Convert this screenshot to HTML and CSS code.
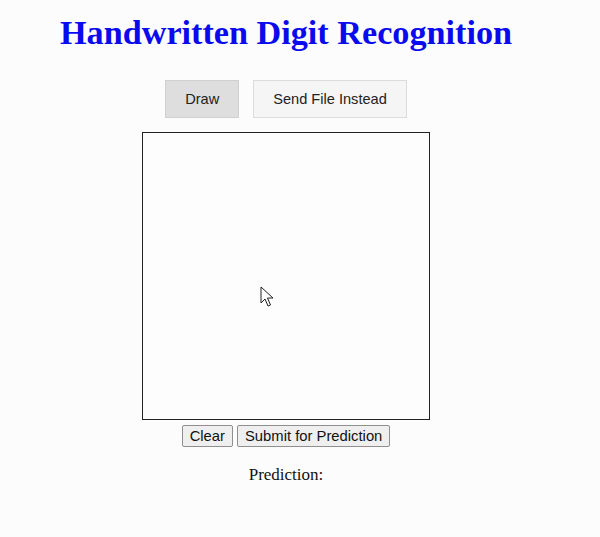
FILE: index.html
```html
<!DOCTYPE html>
<html>
<head>
<meta charset="utf-8">
<link rel="stylesheet" href="styles.css">
</head>
<body>
<div class="page">
  <h1 class="title">Handwritten Digit Recognition</h1>
  <div class="tabs">
    <button class="tab tab-active">Draw</button>
    <button class="tab">Send File Instead</button>
  </div>
  <div class="canvas-wrap">
    <div class="canvas"></div>
    <svg class="cursor" width="14" height="22" viewBox="0 0 14 22">
      <path d="M1 1 L1 17 L5 13 L8 20 L10.5 19 L7.5 12 L13 12 Z" fill="#fff" stroke="#222" stroke-width="1" stroke-linejoin="round"/>
    </svg>
  </div>
  <div class="actions">
    <button class="btn">Clear</button>
    <button class="btn">Submit for Prediction</button>
  </div>
  <p class="prediction">Prediction:</p>
</div>
</body>
</html>
```
FILE: styles.css
```css
html, body {
  margin: 0;
  padding: 0;
  background: #fdfcfd;
}
.page {
  width: 572px;
  text-align: center;
  font-family: "Liberation Serif", "Times New Roman", serif;
}
.title {
  margin: 0;
  padding-top: 13px;
  font-size: 34.2px;
  font-weight: bold;
  color: #0a0aee;
  line-height: 40px;
}
.tabs {
  display: flex;
  justify-content: center;
  gap: 14px;
  margin-top: 27px;
}
.tab {
  font-family: "Liberation Sans", Arial, sans-serif;
  font-size: 14.6px;
  color: #222;
  background: #f6f5f6;
  border: 1px solid #dcdcdc;
  height: 38px;
  padding: 0 19px;
  margin: 0;
}
.tab-active {
  background: #dedede;
  border-color: #d0d0d0;
}
.canvas-wrap {
  position: relative;
  width: 288px;
  margin: 14px auto 0;
}
.canvas {
  width: 286px;
  height: 286px;
  border: 1px solid #222;
  background: #fefdfe;
}
.cursor {
  position: absolute;
  left: 118px;
  top: 154px;
}
.actions {
  display: flex;
  justify-content: center;
  gap: 4px;
  margin-top: 5px;
}
.btn {
  font-family: "Liberation Sans", Arial, sans-serif;
  font-size: 14.8px;
  color: #111;
  background: #efefef;
  border: 1px solid #8f8f8f;
  border-radius: 2px;
  height: 22px;
  padding: 0 7px;
  margin: 0;
}
.prediction {
  margin: 18px 0 0;
  font-size: 17px;
  color: #111;
}
```
